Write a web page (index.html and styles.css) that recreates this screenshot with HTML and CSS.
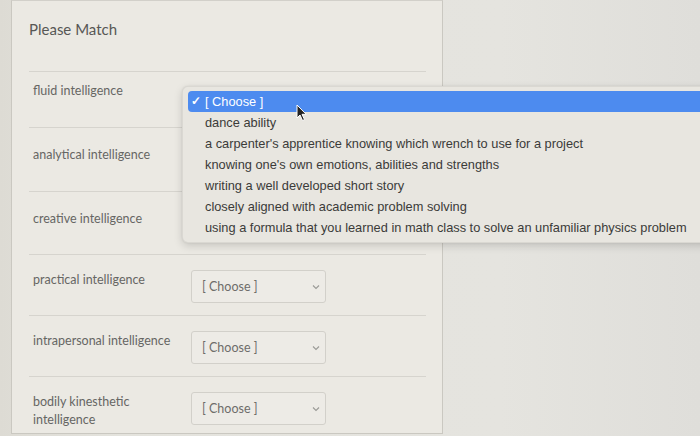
FILE: index.html
```html
<!DOCTYPE html>
<html>
<head>
<meta charset="utf-8">
<link rel="stylesheet" href="styles.css">
</head>
<body>
<div class="card">
  <div class="inner">
    <div class="header">Please Match</div>
    <div class="row first">
      <div class="label">fluid intelligence</div>
      <div class="select"><span>[ Choose ]</span><svg class="chev" width="8" height="6" viewBox="0 0 8 6"><path d="M1 1.5 L4 4.5 L7 1.5" fill="none" stroke="#9a9a96" stroke-width="1.1"/></svg></div>
    </div>
    <div class="row tall">
      <div class="label">analytical intelligence</div>
      <div class="select"><span>[ Choose ]</span><svg class="chev" width="8" height="6" viewBox="0 0 8 6"><path d="M1 1.5 L4 4.5 L7 1.5" fill="none" stroke="#9a9a96" stroke-width="1.1"/></svg></div>
    </div>
    <div class="row tall">
      <div class="label">creative intelligence</div>
      <div class="select"><span>[ Choose ]</span><svg class="chev" width="8" height="6" viewBox="0 0 8 6"><path d="M1 1.5 L4 4.5 L7 1.5" fill="none" stroke="#9a9a96" stroke-width="1.1"/></svg></div>
    </div>
    <div class="row">
      <div class="label">practical intelligence</div>
      <div class="select"><span>[ Choose ]</span><svg class="chev" width="8" height="6" viewBox="0 0 8 6"><path d="M1 1.5 L4 4.5 L7 1.5" fill="none" stroke="#9a9a96" stroke-width="1.1"/></svg></div>
    </div>
    <div class="row">
      <div class="label">intrapersonal intelligence</div>
      <div class="select"><span>[ Choose ]</span><svg class="chev" width="8" height="6" viewBox="0 0 8 6"><path d="M1 1.5 L4 4.5 L7 1.5" fill="none" stroke="#9a9a96" stroke-width="1.1"/></svg></div>
    </div>
    <div class="row last">
      <div class="label">bodily kinesthetic intelligence</div>
      <div class="select"><span>[ Choose ]</span><svg class="chev" width="8" height="6" viewBox="0 0 8 6"><path d="M1 1.5 L4 4.5 L7 1.5" fill="none" stroke="#9a9a96" stroke-width="1.1"/></svg></div>
    </div>
  </div>
</div>

<div class="menu">
  <div class="opt selected"><span class="check">✓</span>[ Choose ]</div>
  <div class="opt">dance ability</div>
  <div class="opt">a carpenter's apprentice knowing which wrench to use for a project</div>
  <div class="opt">knowing one's own emotions, abilities and strengths</div>
  <div class="opt">writing a well developed short story</div>
  <div class="opt">closely aligned with academic problem solving</div>
  <div class="opt">using a formula that you learned in math class to solve an unfamiliar physics problem</div>
</div>

<svg class="cursor" width="12" height="18" viewBox="0 0 12 18">
  <path d="M1 1 L1 14 L4 11 L6.5 16.5 L8.5 15.6 L6 10.3 L10.2 10.3 Z" fill="#222" stroke="#fff" stroke-width="1"/>
</svg>
</body>
</html>
```

FILE: styles.css
```css
html, body {
  margin: 0;
  padding: 0;
  overflow: hidden;
}
body {
  width: 700px;
  height: 436px;
  background: linear-gradient(90deg, #dddbd4 0px, #e4e3dd 120px, #e5e4df 500px, #dfdeda 700px);
  font-family: Lato, "Open Sans", sans-serif;
  position: relative;
}
.card {
  margin-left: 11px;
  width: 430px;
  height: 432px;
  border: 1px solid #cac8c1;
  border-top-color: #d2d0ca;
  background: #ebe9e3;
  overflow: hidden;
}
.inner {
  padding: 0 16px 0 17px;
}
.header {
  height: 71px;
  padding-top: 18px;
  box-sizing: border-box;
  font-size: 15px;
  line-height: 20px;
  color: #575755;
  border-bottom: 1px solid #d6d4ce;
}
.row {
  display: flex;
  align-items: flex-start;
  gap: 8px;
  height: 61px;
  box-sizing: border-box;
  padding: 15px 0 0 4px;
  border-bottom: 1px solid #d6d4ce;
}
.row.first {
  height: 56px;
  padding-top: 9px;
}
.row.first .select {
  margin-top: 7px;
}
.row.tall {
  height: 63.5px;
  padding-top: 17px;
}
.row.last {
  border-bottom: none;
}
.label {
  width: 150px;
  flex: none;
  font-size: 12.5px;
  line-height: 18px;
  color: #666663;
  padding-top: 1px;
}
.select {
  flex: none;
  width: 135px;
  height: 33px;
  box-sizing: border-box;
  border: 1px solid #d2d0ca;
  border-radius: 3px;
  background: #edebe6;
  display: flex;
  align-items: center;
  justify-content: space-between;
  padding: 0 5px 0 10px;
  font-size: 12.5px;
  color: #6d6d6a;
}
.chev {
  margin-top: 1px;
}
.menu {
  position: absolute;
  left: 182px;
  top: 86px;
  width: 560px;
  padding: 4px 5px;
  box-sizing: border-box;
  background: #e8e6e0;
  border: 1px solid rgba(0, 0, 0, 0.06);
  border-radius: 6px;
  box-shadow: 0 3px 9px rgba(0, 0, 0, 0.15), 0 0 2px rgba(0, 0, 0, 0.08);
  font-family: "Liberation Sans", Arial, sans-serif;
  font-size: 12.8px;
  color: #3b3b39;
}
.opt {
  height: 21px;
  line-height: 21px;
  padding-left: 17px;
  position: relative;
  white-space: nowrap;
}
.opt.selected {
  background: #4d8bef;
  color: #fff;
  border-radius: 4px;
}
.check {
  position: absolute;
  left: 3px;
  top: 0;
  font-size: 12px;
  font-weight: bold;
}
.cursor {
  position: absolute;
  left: 296px;
  top: 104px;
}
```
